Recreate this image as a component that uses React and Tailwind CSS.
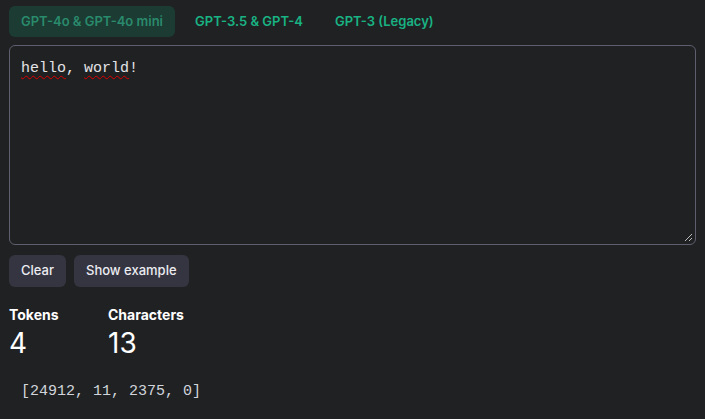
export default function App() {
  const sans = { fontFamily: 'Inter, "Noto Sans", sans-serif' };
  return (
    <div className="w-[705px] h-[419px] bg-[#202123] text-white overflow-hidden" style={sans}>
      <div className="px-[9px] pt-[6px]">
        <div className="flex gap-2 h-[31px]">
          <div className="px-3 flex items-center rounded-md bg-[#1b3b33] text-[#2a8a6c] text-[13px] font-semibold">GPT-4o &amp; GPT-4o mini</div>
          <div className="px-3 flex items-center rounded-md text-[#19b383] text-[13px] font-semibold">GPT-3.5 &amp; GPT-4</div>
          <div className="px-3 flex items-center rounded-md text-[#19b383] text-[13px] font-semibold">GPT-3 (Legacy)</div>
        </div>
        <div className="relative mt-[8px] h-[200px] rounded-md border border-[#5f5e6e] px-[11px] pt-[11px]">
          <div className="text-[15px] leading-[24px] text-[#e4e4e7]" style={{ fontFamily: '"Liberation Mono", monospace' }}>
            <span className="underline decoration-wavy decoration-[#d00] underline-offset-[3px] decoration-1">hello</span>, <span className="underline decoration-wavy decoration-[#d00] underline-offset-[3px] decoration-1">world</span>!
          </div>
          <svg className="absolute right-[2px] bottom-[2px]" width="9" height="9" viewBox="0 0 9 9">
            <line x1="1" y1="8" x2="8" y2="1" stroke="#bbb" strokeWidth="1" />
            <line x1="5" y1="8" x2="8" y2="5" stroke="#bbb" strokeWidth="1" />
          </svg>
        </div>
        <div className="flex gap-2 mt-[10px]">
          <button className="h-[32px] px-3 rounded-md bg-[#343541] text-[13px] font-medium text-[#ececf1]">Clear</button>
          <button className="h-[32px] px-3 rounded-md bg-[#343541] text-[13px] font-medium text-[#ececf1]">Show example</button>
        </div>
        <div className="flex mt-[19px]">
          <div className="w-[99px]">
            <div className="text-[14px] font-bold leading-[18px]">Tokens</div>
            <div className="text-[28px] leading-[36px] mt-[1px]">4</div>
          </div>
          <div>
            <div className="text-[14px] font-bold leading-[18px]">Characters</div>
            <div className="text-[28px] leading-[36px] mt-[1px]">13</div>
          </div>
        </div>
        <div className="mt-[20px] px-3 text-[15px] text-[#d1d5db]" style={{ fontFamily: '"Liberation Mono", monospace' }}>
          [24912, 11, 2375, 0]
        </div>
      </div>
    </div>
  );
}
